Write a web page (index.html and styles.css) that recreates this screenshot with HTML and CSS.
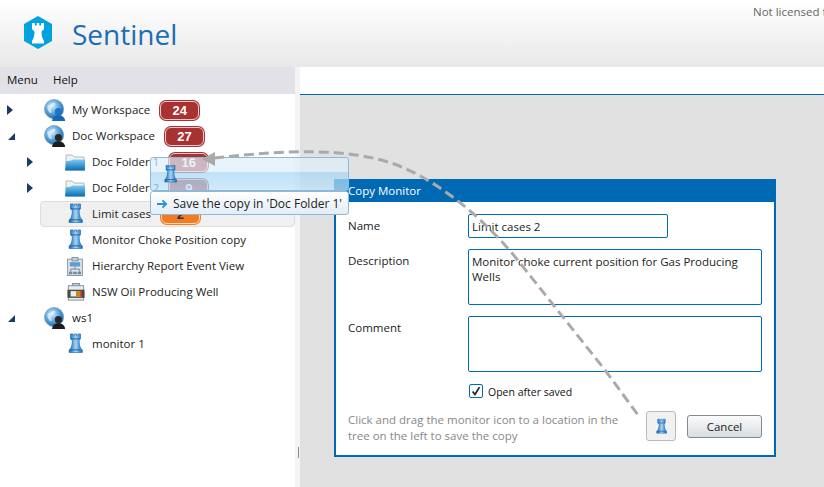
FILE: index.html
```html
<!DOCTYPE html>
<html lang="en">
<head>
<meta charset="utf-8">
<title>Sentinel</title>
<link rel="stylesheet" href="styles.css">
</head>
<body>
<svg class="defs" aria-hidden="true">
  <defs>
    <linearGradient id="gRook" x1="0" x2="1" y1="0" y2="0">
      <stop offset="0" stop-color="#0f5fae"/><stop offset=".5" stop-color="#a5d4f4"/><stop offset="1" stop-color="#1467b5"/>
    </linearGradient>
    <linearGradient id="gFolder" x1="0" x2="0" y1="0" y2="1">
      <stop offset="0" stop-color="#7accf0"/><stop offset="1" stop-color="#0a6cb4"/>
    </linearGradient>
    <radialGradient id="gGlobe" cx=".4" cy=".35" r=".7">
      <stop offset="0" stop-color="#d4ecfa"/><stop offset=".6" stop-color="#4b9ad6"/><stop offset="1" stop-color="#1a5f9f"/>
    </radialGradient>
    <symbol id="rook" viewBox="0 0 16 22">
      <path d="M2.500 1h3v2h1.500V1h2v2h1.500V1h3v5.500l-1.500 1.500c0 3.500.6 6.500 1.800 9l1.700 1.500V21.500H1V18.500l1.700-1.500c1.200-2.500 1.800-5.500 1.800-9L2.500 6.500z" fill="url(#gRook)" stroke="#1467b5" stroke-width=".7"/>
      <path d="M3 6.500h10M3 18.500h10" stroke="#0f5fae" stroke-width="1"/>
    </symbol>
    <symbol id="globe-blue" viewBox="0 0 24 24">
      <circle cx="10.500" cy="10.500" r="10" fill="url(#gGlobe)" stroke="#7d9fbb" stroke-width=".8"/>
      <path d="M4 6c3 1 4-2 7-2 2 1 0 3-2 4s-2 3-1 5-2 2-3 0-2-4-1-7z" fill="#e3f2fb" opacity=".75"/>
      <circle cx="15" cy="13" r="3.700" fill="#1c74c4"/>
      <path d="M8.500 23c0-3.500 2.500-6 6.500-6s7 2.500 7 6z" fill="#1467b5"/>
    </symbol>
    <symbol id="globe-dark" viewBox="0 0 24 24">
      <circle cx="10.500" cy="10.500" r="10" fill="url(#gGlobe)" stroke="#7d9fbb" stroke-width=".8"/>
      <path d="M4 6c3 1 4-2 7-2 2 1 0 3-2 4s-2 3-1 5-2 2-3 0-2-4-1-7z" fill="#e3f2fb" opacity=".75"/>
      <circle cx="15" cy="13" r="3.700" fill="#262626"/>
      <path d="M8.500 23c0-3.500 2.500-6 6.500-6s7 2.500 7 6z" fill="#1c1c1c"/>
    </symbol>
    <symbol id="folder" viewBox="0 0 20 17">
      <path d="M1 16V1h6l2 2h10v13z" fill="#f1f1f1" stroke="#a8a8a8" stroke-width=".8"/>
      <path d="M0 16.500 1 7c3 0 5-.5 7-1.500h12V16.500z" fill="url(#gFolder)"/>
    </symbol>
    <symbol id="report" viewBox="0 0 18 22">
      <rect x=".5" y="2.500" width="17" height="19" fill="#dfe5ea" stroke="#7d8a96"/>
      <rect x="5.500" y=".5" width="7" height="4" fill="#c7ced5" stroke="#7d8a96"/>
      <rect x="3" y="6" width="12" height="5" fill="#5b9fd4"/>
      <path d="M9 11v3M4 17v-3h10v3" fill="none" stroke="#6b7884"/>
      <rect x="2" y="17" width="4" height="3" fill="#6f8aa3"/><rect x="7" y="17" width="4" height="3" fill="#6f8aa3"/><rect x="12" y="17" width="4" height="3" fill="#6f8aa3"/>
    </symbol>
    <symbol id="well" viewBox="0 0 20 20">
      <rect x="6" y=".5" width="8" height="4" fill="#c7ced5" stroke="#7d8a96"/>
      <rect x="1.500" y="3" width="17" height="16" fill="#e6eaee" stroke="#7d8a96"/>
      <rect x=".5" y="7.500" width="19" height="9" fill="#4a4a4a"/>
      <rect x="4" y="9" width="12" height="6" fill="#eeeeee"/>
      <rect x="10" y="9" width="6" height="6" fill="#c8871c"/>
      <rect x="15" y="9" width="1.500" height="6" fill="#c22"/>
    </symbol>
  </defs>
</svg>

<header class="app-header">
  <svg class="logo" viewBox="0 0 28 33" aria-hidden="true">
    <path d="M14 0 28 8v17l-14 8-14-8V8z" fill="#00a3e0"/>
    <path d="M8 7h3v2.500h1.700V7h2.600v2.500H17V7h3v6l-2.500 2.500c0 3.500.6 6.500 2.500 9.500v2.500H8V25c1.900-3 2.500-6 2.500-9.500L8 13z" fill="#fff"/>
  </svg>
  <h1 class="app-title">Sentinel</h1>
  <div class="license">Not licensed for production use</div>
</header>

<div class="app-body">
  <aside class="side">
    <nav class="menu"><span>Menu</span><span>Help</span></nav>
    <ul class="tree">
      <li class="row">
        <span class="twist"><i class="arrow-right"></i></span>
        <svg class="ico ico-ws"><use href="#globe-blue"/></svg>
        <span class="label">My Workspace</span><span class="badge">24</span>
      </li>
      <li class="row">
        <span class="twist"><i class="arrow-open"></i></span>
        <svg class="ico ico-ws"><use href="#globe-dark"/></svg>
        <span class="label">Doc Workspace</span><span class="badge">27</span>
      </li>
      <li class="row l1">
        <span class="twist"><i class="arrow-right"></i></span>
        <svg class="ico ico-folder"><use href="#folder"/></svg>
        <span class="label">Doc Folder 1</span><span class="badge">16</span>
      </li>
      <li class="row l1">
        <span class="twist"><i class="arrow-right"></i></span>
        <svg class="ico ico-folder"><use href="#folder"/></svg>
        <span class="label">Doc Folder 2</span><span class="badge">9</span>
      </li>
      <li class="row l1 selected">
        <svg class="ico ico-rook"><use href="#rook"/></svg>
        <span class="label">Limit cases</span><span class="badge orange">2</span>
      </li>
      <li class="row l1 leaf">
        <svg class="ico ico-rook"><use href="#rook"/></svg>
        <span class="label">Monitor Choke Position copy</span>
      </li>
      <li class="row l1 leaf">
        <svg class="ico ico-report"><use href="#report"/></svg>
        <span class="label">Hierarchy Report Event View</span>
      </li>
      <li class="row l1 leaf">
        <svg class="ico ico-well"><use href="#well"/></svg>
        <span class="label">NSW Oil Producing Well</span>
      </li>
      <li class="row">
        <span class="twist"><i class="arrow-open"></i></span>
        <svg class="ico ico-ws"><use href="#globe-dark"/></svg>
        <span class="label">ws1</span>
      </li>
      <li class="row l1 leaf">
        <svg class="ico ico-rook"><use href="#rook"/></svg>
        <span class="label">monitor 1</span>
      </li>
    </ul>
  </aside>
  <div class="splitter"><i class="grip"></i></div>
  <main class="content">
    <div class="tabbar"></div>
    <div class="stage">
      <section class="dialog">
        <div class="dialog-title">Copy Monitor</div>
        <div class="dialog-body">
          <label class="field-label">Name</label>
          <div class="input single">Limit cases 2</div>
          <label class="field-label">Description</label>
          <div class="input multi">Monitor choke current position for Gas Producing Wells</div>
          <label class="field-label">Comment</label>
          <div class="input multi"></div>
          <div class="check-row">
            <span class="check"><svg viewBox="0 0 14 14" aria-hidden="true"><path d="M3 7.500 5.800 11 11 2.500" fill="none" stroke="#222" stroke-width="2"/></svg></span>
            <span class="check-text">Open after saved</span>
          </div>
          <div class="footer">
            <p class="hint">Click and drag the monitor icon to a location in the tree on the left to save the copy</p>
            <div class="drag-btn"><svg class="ico-drag"><use href="#rook"/></svg></div>
            <div class="cancel">Cancel</div>
          </div>
        </div>
      </section>
    </div>
  </main>
</div>

<div class="drag-ghost">
  <svg class="ghost-icon"><use href="#rook"/></svg>
</div>
<div class="drag-tip">
  <svg class="tip-arrow" viewBox="0 0 12 10" aria-hidden="true"><path d="M0 5h9M6 1l4 4-4 4" fill="none" stroke="#2b8fe0" stroke-width="2"/></svg>
  <span class="tip-text">Save the copy in 'Doc Folder 1'</span>
</div>
<svg class="drag-path" viewBox="0 0 824 487" aria-hidden="true">
  <path d="M214 158C280 151 345 146 397 165C445 184 490 225 520 263L605 370L638 415" fill="none" stroke="#aaaaaa" stroke-width="3" stroke-dasharray="10 5"/>
  <path d="M202 159 215 152V166z" fill="#aaaaaa"/>
</svg>
</body>
</html>
```

FILE: styles.css
```css
* { box-sizing: border-box; }
html, body { margin: 0; height: 100%; }
body {
  width: 824px;
  height: 487px;
  overflow: hidden;
  display: flex;
  flex-direction: column;
  background: #fff;
  color: #222;
  font: 11.500px/16px "Open Sans", "Noto Sans", sans-serif;
  position: relative;
}
.defs { display: block; width: 0; height: 0; }

.app-header {
  height: 67px;
  flex: none;
  display: flex;
  align-items: flex-start;
  padding-left: 24px;
  background: linear-gradient(#ffffff, #e8e8e9);
  overflow: hidden;
}
.logo { width: 28px; height: 33px; margin-top: 16px; flex: none; }
.app-title {
  margin: 13px 0 0 20px;
  font-size: 28px;
  line-height: 42px;
  font-weight: 400;
  color: #1b6db5;
  flex: none;
  width: 681px;
}
.license {
  margin-top: 4px;
  white-space: nowrap;
  color: #666;
}

.app-body { flex: 1; display: flex; min-height: 0; }
.side { width: 295px; flex: none; display: flex; flex-direction: column; }
.menu {
  height: 27px;
  flex: none;
  display: flex;
  align-items: center;
  gap: 15px;
  padding: 0 0 1px 7px;
  background: #e1e1e7;
  color: #111;
}
.tree { list-style: none; margin: 3px 0 0; padding: 0; }
.row { height: 26px; display: flex; align-items: center; color: #222; }
.row.l1 { padding-left: 20px; }
.row.leaf { padding-left: 60px; }
.row.selected {
  margin-left: 40px;
  padding-left: 19px;
  background: #f0f0f0;
  border: 1px solid #dddddd;
  border-radius: 4px;
}
.twist { width: 40px; flex: none; padding-left: 7px; display: flex; align-items: center; }
.arrow-right {
  width: 0; height: 0;
  border-left: 6px solid #1c3a66;
  border-top: 5px solid transparent;
  border-bottom: 5px solid transparent;
}
.arrow-open {
  width: 0; height: 0;
  margin-left: 1px;
  border-right: 7px solid #1c3a66;
  border-top: 7px solid transparent;
}
.ico { flex: none; }
.ico-ws { width: 23px; height: 23px; margin: 0 5px 0 4px; }
.ico-folder { width: 20px; height: 17px; margin: 0 7px 0 5px; }
.ico-rook { width: 15px; height: 20px; margin: 0 9px 2px 8px; }
.ico-report { width: 16px; height: 19px; margin: 0 9px 0 7px; }
.ico-well { width: 18px; height: 20px; margin: 0 7px 0 7px; }
.badge {
  width: 39px;
  height: 19px;
  margin-left: 10px;
  flex: none;
  text-align: center;
  font: 700 13px/17px "Liberation Sans", sans-serif;
  color: #fff;
  background: #a83232;
  border: 1px solid #e9c9c9;
  border-radius: 6px;
  box-shadow: 0 0 0 1px #a83232;
}
.badge.orange { background: #f47b20; box-shadow: 0 0 0 1px #f47b20; border-color: #fbd9c0; color: #333; }

.splitter { width: 5px; flex: none; background: #f4f4f4; display: flex; align-items: flex-end; justify-content: center; padding-bottom: 29px; }
.grip { width: 1px; height: 11px; background: #8a8a8a; margin-left: 2px; }

.content { flex: 1; display: flex; flex-direction: column; min-width: 0; }
.tabbar { height: 28px; flex: none; background: #fff; border-bottom: 1px solid #0069b3; }
.stage { flex: 1; background: #e1e1e1; padding: 84px 0 0 34px; }
.dialog {
  width: 442px;
  height: 278px;
  border: 2px solid #0069b3;
  border-top: 0;
  background: #fff;
  display: flex;
  flex-direction: column;
}
.dialog-title {
  height: 23px;
  flex: none;
  margin: 0 -2px;
  padding: 4px 0 0 14px;
  background: #0069b3;
  color: #fff;
}
.dialog-body {
  flex: 1;
  padding: 12px 12px 0 12px;
  display: grid;
  grid-template-columns: 120px 294px;
  grid-auto-rows: min-content;
  row-gap: 11px;
}
.field-label { color: #222; padding-top: 4px; }
.input {
  border: 1px solid #0069b3;
  border-radius: 2px;
  padding: 4px 3px;
  line-height: 15px;
  color: #222;
  background: #fff;
}
.input.single { width: 200px; height: 24px; }
.input.multi { height: 56px; }
.check-row {
  grid-column: 2;
  display: flex;
  align-items: center;
  gap: 5px;
  height: 14px;
  margin-top: 1px;
  padding-left: 1px;
  color: #111;
  font-size: 10.500px;
}
.check-text { padding-top: 2px; }
.check {
  width: 14px;
  height: 14px;
  border: 1px solid #0069b3;
  border-radius: 2px;
  display: block;
  flex: none;
}
.check svg { display: block; width: 12px; height: 12px; }
.footer {
  grid-column: 1 / -1;
  display: flex;
  align-items: center;
  margin-top: 2px;
  height: 30px;
}
.hint { margin: 3px 0 0; width: 298px; padding-right: 18px; color: #888; flex: none; }
.drag-btn {
  width: 30px;
  height: 30px;
  flex: none;
  background: #f1f1f1;
  border: 1px solid #b9b9b9;
  border-radius: 3px;
  display: flex;
  align-items: center;
  justify-content: center;
}
.ico-drag { width: 11px; height: 16px; }
.cancel {
  width: 75px;
  height: 23px;
  flex: none;
  margin: 0 0 0 11px;
  text-align: center;
  line-height: 21px;
  color: #222;
  background: linear-gradient(#fbfbfb, #d9dde1);
  border: 1px solid #7f8a95;
  border-radius: 3px;
}

.drag-ghost {
  position: absolute;
  left: 150px;
  top: 157px;
  width: 199px;
  height: 34px;
  border: 1px solid #8db8d6;
  border-radius: 3px;
  background: linear-gradient(rgba(222,239,250,.7) 0, rgba(222,239,250,.7) 44%, rgba(165,214,245,.72) 44%, rgba(190,226,248,.72) 100%);
}
.ghost-icon { position: absolute; left: 13px; top: 6px; width: 13px; height: 19px; }
.drag-tip {
  position: absolute;
  left: 150px;
  top: 191px;
  width: 199px;
  height: 24px;
  display: flex;
  align-items: center;
  padding: 1px 0 0 6px;
  gap: 5px;
  border: 1px solid #8db8d6;
  border-radius: 3px;
  color: #222;
  white-space: nowrap;
  background: linear-gradient(#ffffff, #e3edf6);
}
.tip-text { font-size: 12px; }
.tip-arrow { width: 11px; height: 10px; flex: none; }
.drag-path { position: absolute; left: 0; top: 0; width: 824px; height: 487px; pointer-events: none; }
```
